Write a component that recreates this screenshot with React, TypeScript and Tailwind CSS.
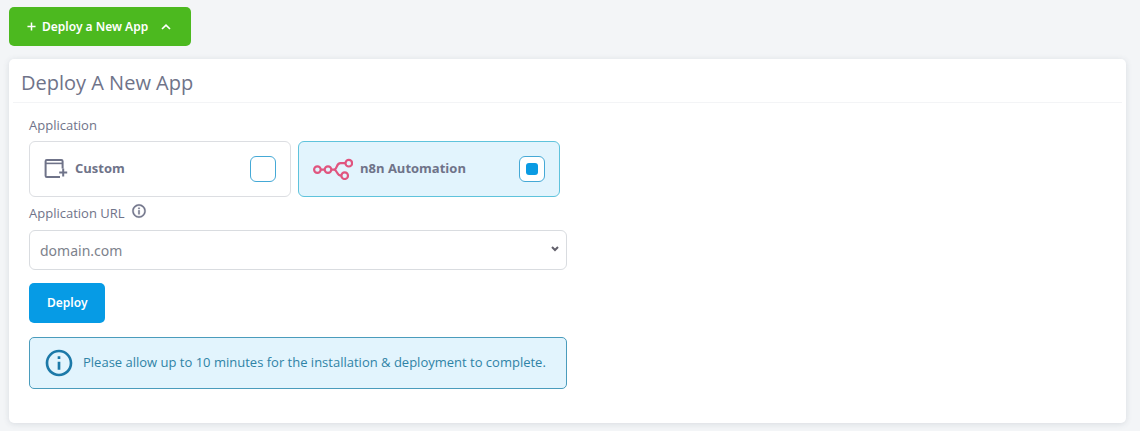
import { useState } from "react";
import type { ReactNode } from "react";

function InfoIcon({ className }: { className: string }) {
  return (
    <svg viewBox="0 0 24 24" className={className} fill="currentColor" stroke="currentColor" aria-hidden="true">
      <path d="M11 7h2v2h-2zm0 4h2v6h-2zm1-9C6.48 2 2 6.48 2 12s4.48 10 10 10 10-4.48 10-10S17.52 2 12 2zm0 18c-4.41 0-8-3.59-8-8s3.59-8 8-8 8 3.59 8 8-3.59 8-8 8z" />
    </svg>
  );
}

function CustomIcon() {
  return (
    <svg viewBox="0 0 24 20" className="h-5 w-6" fill="none" stroke="currentColor" aria-hidden="true">
      <path d="M18.6 9.5V2.2Q18.6 1 17.4 1H2.8Q1.6 1 1.6 2.2V16.8Q1.6 18 2.8 18H16" strokeWidth="2" />
      <path d="M1.6 4.4H18.6" strokeWidth="1.6" />
      <path d="M19.2 9.4V17.4M15.2 13.4H23.2" strokeWidth="2" />
    </svg>
  );
}

function N8nIcon() {
  return (
    <svg viewBox="0 0 40 22" className="h-[22px] w-10" fill="none" stroke="#e0557f" strokeWidth="2.2" aria-hidden="true">
      <circle cx="4.4" cy="11.6" r="3.3" />
      <circle cx="15" cy="11.6" r="3.3" />
      <circle cx="35.8" cy="5.2" r="3.3" />
      <circle cx="31.7" cy="17.7" r="3.3" />
      <path d="M7.7 11.6H11.7M18.3 11.6H21C24.5 11.6 23 5.2 27.5 5.2H32.5M21 11.6C24.5 11.6 23 17.7 28.4 17.7" />
    </svg>
  );
}

type OptionProps = {
  label: string;
  icon: ReactNode;
  value: string;
  selected: string;
  onSelect: (value: string) => void;
};

function AppOption({ label, icon, value, selected, onSelect }: OptionProps) {
  return (
    <label
      className={
        "flex h-14 cursor-pointer items-center gap-[7px] rounded-md border px-3.5 text-[13px] font-bold " +
        (selected === value ? "border-[#5fc3dc] bg-[#e2f4fd]" : "border-[#dcdee2] bg-white")
      }
    >
      {icon}
      <span className="flex-1">{label}</span>
      <input
        type="radio"
        name="application"
        value={value}
        checked={selected === value}
        onChange={() => onSelect(value)}
        className="grid size-[26px] cursor-pointer appearance-none place-items-center rounded-md border border-[#45a9d6] bg-white before:size-3 before:rounded-[3px] before:content-[''] checked:before:bg-[#0a9be3]"
      />
    </label>
  );
}

export default function App() {
  const [open, setOpen] = useState(true);
  const [application, setApplication] = useState("n8n");

  return (
    <main className="min-h-screen bg-[#f3f5f7] pt-[7px] pr-3.5 pb-2 pl-[9px] font-['Open_Sans','Noto_Sans',sans-serif] text-[#6f7389]">
      <button
        type="button"
        aria-expanded={open}
        onClick={() => setOpen(!open)}
        className="flex h-[39px] items-center rounded-[5px] bg-[#4cb91f] pr-5 pl-[18px] font-['Noto_Sans','Open_Sans',sans-serif] text-[12px] font-semibold text-white"
      >
        <svg viewBox="0 0 10 10" className="mr-1.5 size-[9px]" stroke="currentColor" strokeWidth="1.7" aria-hidden="true">
          <path d="M5 0.5V9.5M0.5 5H9.5" />
        </svg>
        Deploy a New App
        <svg viewBox="0 0 10 6" className="ml-[13px] h-[6px] w-[10px]" fill="none" stroke="currentColor" strokeWidth="1.7" aria-hidden="true">
          <path d="M1 5L5 1.2L9 5" />
        </svg>
      </button>

      {open && (
        <section className="mt-[13px] rounded-[5px] bg-white pb-[34px] shadow-[0_1px_6px_rgba(60,70,90,0.14)]">
          <h1 className="mx-1 border-b border-[#f3f4f6] px-2 pt-[10px] pb-[5px] text-xl leading-7">Deploy A New App</h1>
          <form className="mx-5 mt-3 max-w-[538px]" onSubmit={(e) => e.preventDefault()}>
            <fieldset className="pr-[7px]">
              <legend className="pb-1.5 text-[13px] leading-5">Application</legend>
              <div className="grid grid-cols-2 gap-[7px]">
                <AppOption label="Custom" icon={<CustomIcon />} value="custom" selected={application} onSelect={setApplication} />
                <AppOption label="n8n Automation" icon={<N8nIcon />} value="n8n" selected={application} onSelect={setApplication} />
              </div>
            </fieldset>

            <div className="mt-1.5 flex h-[27px] gap-1.5 text-[13px] leading-5">
              <label htmlFor="app-url">Application URL</label>
              <InfoIcon className="size-4 stroke-[0.5]" />
            </div>
            <div className="relative">
              <select
                id="app-url"
                className="block h-10 w-full appearance-none rounded-md border border-[#d9dce0] bg-white px-2.5 font-['Noto_Sans','Open_Sans',sans-serif] text-[14px] text-[#7d828c]"
              >
                <option>domain.com</option>
              </select>
              <svg
                viewBox="0 0 8 6"
                className="pointer-events-none absolute top-4 right-2 h-[6px] w-2"
                fill="none"
                stroke="#62606b"
                strokeWidth="2"
                aria-hidden="true"
              >
                <path d="M1 1L4 4L7 1" />
              </svg>
            </div>

            <button type="submit" className="mt-[13px] h-10 rounded-[5px] bg-[#069be5] px-[18px] font-['Noto_Sans','Open_Sans',sans-serif] text-[12px] font-semibold text-white">
              Deploy
            </button>

            <div role="status" className="mt-3.5 flex min-h-[52px] items-center gap-2 rounded-[5px] border border-[#4a9cbc] bg-[#e2f4fd] px-[13px] text-[13px] text-[#2f83a6]">
              <InfoIcon className="size-8 stroke-0 text-[#1c79a8]" />
              Please allow up to 10 minutes for the installation &amp; deployment to complete.
            </div>
          </form>
        </section>
      )}
    </main>
  );
}
